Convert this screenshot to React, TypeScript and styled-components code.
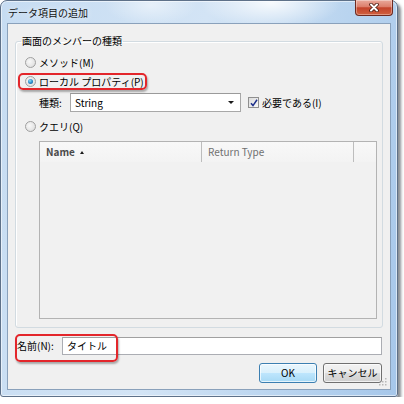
import React from "react";
import styled, { createGlobalStyle } from "styled-components";

const GlobalStyle = createGlobalStyle`
  html, body {
    margin: 0;
    padding: 0;
    background: #ffffff;
  }
  body {
    font-family: "Noto Sans CJK JP", "Noto Sans", sans-serif;
    font-size: 10px;
    line-height: 14px;
    color: #000000;
  }
  * {
    box-sizing: border-box;
  }
`;

const Window = styled.div`
  width: 398px;
  height: 397px;
  display: flex;
  flex-direction: column;
  padding: 0 6px 6px;
  border: 1px solid #5e7189;
  border-radius: 7px 7px 3px 3px;
  background:
    radial-gradient(ellipse 70px 26px at 270px 2px, rgba(255, 255, 255, 0.85), rgba(255, 255, 255, 0)),
    radial-gradient(ellipse 46px 20px at 150px 4px, rgba(255, 255, 255, 0.5), rgba(255, 255, 255, 0)),
    linear-gradient(100deg, #c6dcf2 0%, #d3e4f5 45%, #b9d4ef 75%, #a6c7ea 100%);
  box-shadow: inset 0 0 0 1px rgba(255, 255, 255, 0.55),
    3px 3px 3px rgba(40, 50, 60, 0.55);
`;

const TitleBar = styled.div`
  height: 22px;
  display: flex;
  justify-content: space-between;
  align-items: flex-start;
`;

const Title = styled.div`
  padding: 5px 0 0 1px;
  color: #111111;
  text-shadow: 0 0 6px rgba(255, 255, 255, 0.9);
`;

const CloseButton = styled.div`
  width: 38px;
  height: 16px;
  margin: -1px -2px 0 0;
  display: flex;
  align-items: center;
  justify-content: center;
  border: 1px solid #6e2a20;
  border-top: none;
  border-radius: 0 0 4px 4px;
  background: linear-gradient(#e9a99b 0%, #dc7e6b 45%, #c3432b 52%, #d0613f 100%);
  box-shadow: inset 0 0 0 1px rgba(255, 255, 255, 0.35);
`;

const Client = styled.div`
  position: relative;
  flex: 1;
  display: flex;
  flex-direction: column;
  padding: 0 7px;
  background: #f0f0f0;
  border: 1px solid #8aa1bb;
`;

const Group = styled.fieldset`
  margin: 10px 0 0;
  padding: 0 5px 8px;
  min-width: 0;
  display: flex;
  flex-direction: column;
  border: 1px solid #d2dbe1;
  border-radius: 3px;
  box-shadow: inset 1px 1px 0 #ffffff;
`;

const Legend = styled.legend`
  padding: 0 1px;
`;

const Option = styled.label<{ $gap?: number }>`
  position: relative;
  height: 19px;
  margin-top: ${p => p.$gap ?? 0}px;
  padding-left: 4px;
  display: flex;
  align-items: center;
  gap: 3px;
`;

const Radio = styled.span<{ $checked?: boolean }>`
  width: 11px;
  height: 11px;
  border-radius: 50%;
  display: flex;
  align-items: center;
  justify-content: center;
  border: 1px solid #a0a0a0;
  background: radial-gradient(circle at 40% 40%, #f8f8f8 0%, #e4e4e4 65%, #d2d2d2 100%);
  &::after {
    content: "";
    display: ${p => (p.$checked ? "block" : "none")};
    width: 5px;
    height: 5px;
    border-radius: 50%;
    background: radial-gradient(circle at 40% 35%, #8fe0f8 0%, #2a8ccc 50%, #17598f 100%);
  }
`;

const Highlight = styled.span<{ $left: number; $top: number; $w: number; $h: number }>`
  position: absolute;
  left: ${p => p.$left}px;
  top: ${p => p.$top}px;
  width: ${p => p.$w}px;
  height: ${p => p.$h}px;
  border: 2px solid #e3262b;
  border-radius: 5px;
  box-shadow: 1px 2px 2px rgba(0, 0, 0, 0.3);
  pointer-events: none;
`;

const KindRow = styled.div`
  height: 19px;
  margin-top: 2px;
  padding-left: 18px;
  display: flex;
  align-items: center;
`;

const FieldLabel = styled.span<{ $w: number }>`
  width: ${p => p.$w}px;
  flex: none;
`;

const Combo = styled.div`
  width: 171px;
  height: 19px;
  display: flex;
  align-items: center;
  justify-content: space-between;
  padding: 0 6px 0 4px;
  background: #ffffff;
  border: 1px solid #a8a8a8;
  border-top-color: #9a9a9a;
`;

const DropArrow = styled.span`
  width: 0;
  height: 0;
  border-left: 3px solid transparent;
  border-right: 3px solid transparent;
  border-top: 3px solid #1a1a1a;
`;

const Check = styled.span`
  width: 11px;
  height: 11px;
  margin: 0 3px 0 7px;
  display: flex;
  align-items: center;
  justify-content: center;
  border: 1px solid #8f8f8f;
  background: linear-gradient(135deg, #dcdcdc, #f8f8f8);
`;

const ListView = styled.div`
  height: 178px;
  margin: 5px 0 0 18px;
  display: flex;
  flex-direction: column;
  background: #f1f1f1;
  border: 1px solid #b3b3b3;
`;

const Header = styled.div`
  height: 20px;
  display: flex;
  background: linear-gradient(#f8f8f8, #f3f3f3);
`;

const HeaderCell = styled.div<{ $w?: number; $sorted?: boolean }>`
  width: ${p => (p.$w ? `${p.$w}px` : "auto")};
  flex: ${p => (p.$w ? "none" : "1")};
  display: flex;
  align-items: center;
  gap: 5px;
  padding-left: 6px;
  border-right: ${p => (p.$w ? "1px solid #bdbdbd" : "none")};
  color: ${p => (p.$sorted ? "#4a4a4a" : "#707070")};
  font-weight: ${p => (p.$sorted ? 700 : 400)};
`;

const SortArrow = styled.span`
  width: 0;
  height: 0;
  margin-top: 1px;
  border-left: 2.5px solid transparent;
  border-right: 2.5px solid transparent;
  border-bottom: 3px solid #1a1a1a;
`;

const NameRow = styled.div`
  position: relative;
  height: 18px;
  margin: 9px 1px 0 0;
  padding-left: 2px;
  display: flex;
  align-items: center;
`;

const TextBox = styled.div`
  flex: 1;
  height: 18px;
  display: flex;
  align-items: center;
  padding-left: 4px;
  background: #ffffff;
  border: 1px solid #abadb3;
  border-top-color: #a0a0a0;
`;

const Buttons = styled.div`
  height: 20px;
  margin: 8px 1px 0 0;
  display: flex;
  justify-content: flex-end;
  gap: 6px;
`;

const Button = styled.div<{ $w: number; $default?: boolean }>`
  width: ${p => p.$w}px;
  height: 20px;
  display: flex;
  align-items: center;
  justify-content: center;
  border-radius: 3px;
  border: 1px solid ${p => (p.$default ? "#3c7fb1" : "#707070")};
  background: ${p =>
    p.$default
      ? "linear-gradient(#eaf6fd 0%, #d9f0fc 50%, #bee6fd 50%, #a7d9f5 100%)"
      : "linear-gradient(#f2f2f2 0%, #ebebeb 50%, #dddddd 50%, #cfcfcf 100%)"};
  box-shadow: inset 0 0 0 1px rgba(255, 255, 255, 0.7);
`;

const Grip = styled.svg`
  position: absolute;
  right: 2px;
  bottom: 2px;
`;

const App = () => (
  <>
    <GlobalStyle />
    <Window>
      <TitleBar>
        <Title>データ項目の追加</Title>
        <CloseButton>
          <svg width="10" height="9" viewBox="0 0 10 9">
            <path d="M2 1.5 L8 7.5 M8 1.5 L2 7.5" stroke="#4a1a10" strokeWidth="3.6" strokeLinecap="round" />
            <path d="M2 1.5 L8 7.5 M8 1.5 L2 7.5" stroke="#ffffff" strokeWidth="2" strokeLinecap="round" />
          </svg>
        </CloseButton>
      </TitleBar>
      <Client>
        <Group>
          <Legend>画面のメンバーの種類</Legend>
          <Option $gap={5}>
            <Radio />
            メソッド(M)
          </Option>
          <Option>
            <Radio $checked />
            ローカル プロパティ(P)
            <Highlight $left={-3} $top={1} $w={129} $h={17} />
          </Option>
          <KindRow>
            <FieldLabel $w={31}>種類:</FieldLabel>
            <Combo>
              String
              <DropArrow />
            </Combo>
            <Check>
              <svg width="8" height="8" viewBox="0 0 8 8">
                <path d="M1 4.2 L3 6.6 L7 0.8" fill="none" stroke="#1d2f8a" strokeWidth="1.5" />
              </svg>
            </Check>
            必要である(I)
          </KindRow>
          <Option $gap={5}>
            <Radio />
            クエリ(Q)
          </Option>
          <ListView>
            <Header>
              <HeaderCell $w={162} $sorted>
                Name
                <SortArrow />
              </HeaderCell>
              <HeaderCell $w={152}>Return Type</HeaderCell>
              <HeaderCell />
            </Header>
          </ListView>
        </Group>
        <NameRow>
          <FieldLabel $w={45}>名前(N):</FieldLabel>
          <TextBox>タイトル</TextBox>
          <Highlight $left={0} $top={-3} $w={103} $h={28} />
        </NameRow>
        <Buttons>
          <Button $w={58} $default>
            OK
          </Button>
          <Button $w={59}>キャンセル</Button>
        </Buttons>
        <Grip width="10" height="10" viewBox="0 0 10 10">
          {[
            [8, 2],
            [8, 5],
            [5, 5],
            [8, 8],
            [5, 8],
            [2, 8]
          ].map(([x, y]) => (
            <rect key={`${x}-${y}`} x={x - 1} y={y - 1} width="1.5" height="1.5" fill="#b8b8b8" />
          ))}
        </Grip>
      </Client>
    </Window>
  </>
);

export default App;
